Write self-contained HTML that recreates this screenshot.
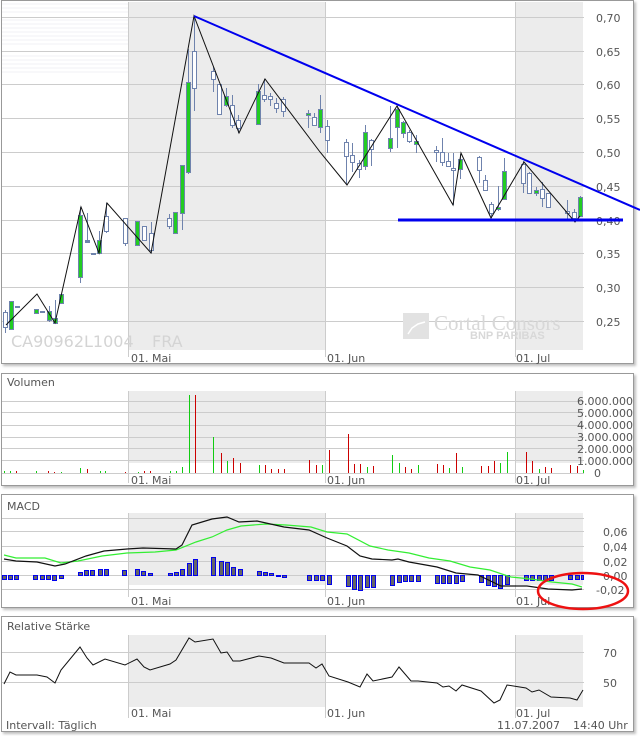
<!DOCTYPE html>
<html><head><meta charset="utf-8"><style>
html,body{margin:0;padding:0;background:#fff;width:640px;height:736px;overflow:hidden}
svg{display:block}
text{font-family:"DejaVu Sans","Liberation Sans",sans-serif;fill:#555;font-size:11px}
</style></head><body>
<svg width="640" height="736" viewBox="0 0 640 736" xmlns="http://www.w3.org/2000/svg">
<defs><filter id="sh" x="-5%" y="-5%" width="110%" height="110%"><feDropShadow dx="2" dy="2" stdDeviation="1.2" flood-color="#000" flood-opacity="0.25"/></filter></defs>
<g fill="#fff" stroke="#999" stroke-width="1" filter="url(#sh)">
<rect x="1.5" y="0.5" width="632" height="363"/>
<rect x="1.5" y="373.5" width="632" height="112"/>
<rect x="1.5" y="494.5" width="632" height="113"/>
<rect x="1.5" y="616.5" width="632" height="115"/>
</g>
<g fill="#ececec"><rect x="128" y="2" width="197" height="348"/><rect x="515" y="2" width="68" height="348"/></g>
<g stroke="#f2f2f6" stroke-width="1"><path d="M2 4H128M2 8H128M2 12H128M2 20H128M2 24H128M2 28H128M2 32H128M2 36H128M2 40H128M2 44H128M2 56H128M2 60H128M2 64H128M2 68H128M2 72H128"/></g>
<g stroke="#ccc" stroke-width="1"><path d="M2 17.5H584M2 51.5H584M2 84.5H584M2 118.5H584M2 152.5H584M2 186.5H584M2 220.5H584M2 253.5H584M2 287.5H584M2 321.5H584"/><path d="M128.5 2V357M325.5 2V357M515.5 2V357"/></g>
<g font-size="12"><text x="596" y="22">0,70</text><text x="596" y="56">0,65</text><text x="596" y="89">0,60</text><text x="596" y="123">0,55</text><text x="596" y="157">0,50</text><text x="596" y="191">0,45</text><text x="596" y="225">0,40</text><text x="596" y="258">0,35</text><text x="596" y="292">0,30</text><text x="596" y="326">0,25</text></g>
<text x="131" y="362" font-size="12">01. Mai</text><text x="327" y="362" font-size="12">01. Jun</text><text x="516" y="362" font-size="12">01. Jul</text>
<text x="11" y="347" style="font-size:16px;fill:#d4d4d4">CA90962L1004</text>
<text x="152" y="347" style="font-size:16px;fill:#d4d4d4">FRA</text>
<rect x="403" y="313" width="26" height="26" fill="#e2e2e2"/>
<path d="M408 334l4-6 6-4 7-2" stroke="#fff" stroke-width="1.5" fill="none"/>
<text x="434" y="330" style="font-family:'Liberation Serif',serif;font-size:21px;fill:#d8d8d8">Cortal Consors</text>
<text x="470" y="339" style="font-family:'Liberation Sans',sans-serif;font-size:11px;font-weight:bold;fill:#d8d8d8">BNP PARIBAS</text>
<path stroke="#6f83ad" stroke-width="1" fill="none" d="M5.5 310V333M49.5 306V322M55.5 300V323M80.5 207V283M87.5 213V243M99.5 231V253M106.5 203V233M125.5 218V246M151.5 222V253M169.5 214V229M182.5 165V230M188.5 49V174M194.5 16V111M213.5 67V92M226.5 88V107M232.5 95V128M238.5 115V133M258.5 84V124M264.5 79V102M270.5 93V106M276.5 98V113M283.5 97V117M308.5 110V128M314.5 113V126M320.5 95V133M327.5 120V153M346.5 139V184M352.5 143V172M359.5 160V178M365.5 125V170M371.5 139V166M390.5 106V152M397.5 106V148M403.5 121V138M409.5 130V143M416.5 135V153M436.5 146V162M442.5 138V166M448.5 153V166M453.5 153V205M460.5 154V179M479.5 156V183M485.5 175V191M491.5 202V218M498.5 186V211M504.5 158V200M523.5 161V193M529.5 172V193M536.5 187V196M542.5 182V207M548.5 193V208M567.5 200V220M574.5 209V221M580.5 196V216"/>
<g stroke="#6f83ad" stroke-width="1" fill="#fff">
<rect x="3.5" y="312.5" width="4" height="15"/><rect x="104.5" y="216.5" width="4" height="15"/><rect x="123.5" y="218.5" width="4" height="25"/><rect x="142.5" y="226.5" width="4" height="14"/><rect x="149.5" y="233.5" width="4" height="17"/><rect x="167.5" y="218.5" width="4" height="8"/><rect x="192.5" y="51.5" width="4" height="37"/><rect x="211.5" y="71.5" width="4" height="8"/><rect x="217.5" y="84.5" width="4" height="30"/><rect x="230.5" y="105.5" width="4" height="20"/><rect x="236.5" y="120.5" width="4" height="8"/><rect x="262.5" y="95.5" width="4" height="4"/><rect x="268.5" y="96.5" width="4" height="3"/><rect x="274.5" y="103.5" width="4" height="5"/><rect x="281.5" y="99.5" width="4" height="12"/><rect x="312.5" y="117.5" width="4" height="8"/><rect x="325.5" y="126.5" width="4" height="14"/><rect x="344.5" y="142.5" width="4" height="14"/><rect x="350.5" y="155.5" width="4" height="7"/><rect x="357.5" y="163.5" width="4" height="6"/><rect x="369.5" y="140.5" width="4" height="9"/><rect x="407.5" y="132.5" width="4" height="9"/><rect x="434.5" y="150.5" width="4" height="2"/><rect x="440.5" y="152.5" width="4" height="10"/><rect x="446.5" y="161.5" width="4" height="5"/><rect x="451.5" y="168.5" width="4" height="2"/><rect x="477.5" y="157.5" width="4" height="13"/><rect x="483.5" y="180.5" width="4" height="10"/><rect x="489.5" y="204.5" width="4" height="9"/><rect x="521.5" y="164.5" width="4" height="19"/><rect x="527.5" y="173.5" width="4" height="20"/><rect x="540.5" y="189.5" width="4" height="9"/><rect x="546.5" y="193.5" width="4" height="14"/><rect x="565.5" y="211.5" width="4" height="2"/><rect x="572.5" y="212.5" width="4" height="6"/>
</g>
<g fill="#6f83ad"><rect x="15" y="306" width="5" height="2"/><rect x="40" y="311" width="5" height="2"/><rect x="85" y="240" width="5" height="3"/><rect x="91" y="253" width="5" height="2"/></g>
<g stroke="#6f83ad" stroke-width="1" fill="#22cc22">
<rect x="9.5" y="301.5" width="4" height="28"/><rect x="34.5" y="309.5" width="4" height="4"/><rect x="47.5" y="311.5" width="4" height="9"/><rect x="53.5" y="318.5" width="4" height="5"/><rect x="59.5" y="294.5" width="4" height="9"/><rect x="78.5" y="215.5" width="4" height="62"/><rect x="97.5" y="240.5" width="4" height="13"/><rect x="135.5" y="221.5" width="4" height="24"/><rect x="173.5" y="212.5" width="4" height="21"/><rect x="180.5" y="165.5" width="4" height="48"/><rect x="186.5" y="82.5" width="4" height="90"/><rect x="224.5" y="96.5" width="4" height="9"/><rect x="256.5" y="91.5" width="4" height="33"/><rect x="306.5" y="113.5" width="4" height="2"/><rect x="318.5" y="109.5" width="4" height="18"/><rect x="363.5" y="132.5" width="4" height="34"/><rect x="388.5" y="138.5" width="4" height="10"/><rect x="395.5" y="109.5" width="4" height="18"/><rect x="401.5" y="122.5" width="4" height="11"/><rect x="414.5" y="141.5" width="4" height="3"/><rect x="458.5" y="159.5" width="4" height="10"/><rect x="496.5" y="207.5" width="4" height="2"/><rect x="502.5" y="171.5" width="4" height="28"/><rect x="534.5" y="190.5" width="4" height="3"/><rect x="578.5" y="197.5" width="4" height="19"/>
</g>
<polyline fill="none" stroke="#111" stroke-width="1" points="6,325 37,294 55,323 81,207 99,253 107,203 151,253 194,16 239,133 265,79 320,152 347,185 397,106 453,205 461,153 491,218 524,162 575,222 580,216"/>
<line x1="194" y1="16" x2="640" y2="210" stroke="#0000ee" stroke-width="2"/>
<line x1="398" y1="220" x2="623" y2="220" stroke="#0000ee" stroke-width="3"/>
<text x="7" y="386" font-size="11">Volumen</text>
<g fill="#ececec"><rect x="128" y="391" width="197" height="72"/><rect x="515" y="391" width="68" height="72"/></g>
<g stroke="#ccc"><path d="M2 401.5H584M2 412.5H584M2 425.5H584M2 437.5H584M2 448.5H584M2 460.5H584M2 473.5H584"/><path d="M128.5 391V483M325.5 391V483M515.5 391V483"/></g>
<g font-size="12" text-anchor="end"><text x="633" y="405">6.000.000</text><text x="633" y="417">5.000.000</text><text x="633" y="429">4.000.000</text><text x="633" y="441">3.000.000</text><text x="633" y="453">2.000.000</text><text x="633" y="465">1.000.000</text><text x="601" y="477">0</text></g>
<text x="131" y="484" font-size="12">01. Mai</text><text x="327" y="484" font-size="12">01. Jun</text><text x="516" y="484" font-size="12">01. Jul</text>
<path stroke="#11cc11" stroke-width="1" d="M4.5 471V473M10.5 471V473M36.5 471V473M61.5 472V473M80.5 468V473M100.5 471V473M105.5 471V473M138.5 472V473M170.5 471V473M176.5 471V473M182.5 467V473M189.5 395V473M213.5 437V473M227.5 461V473M259.5 465V473M322.5 465V473M367.5 467V473M392.5 455V473M399.5 463V473M418.5 465V473M449.5 468V473M462.5 467V473M500.5 463V473M507.5 452V473M539.5 469V473M583.5 470V473"/>
<path stroke="#cc0000" stroke-width="1" d="M16.5 471V473M48.5 471V473M54.5 472V473M87.5 469V473M125.5 472V473M144.5 471V473M150.5 471V473M195.5 395V473M221.5 453V473M233.5 458V473M240.5 463V473M265.5 465V473M271.5 469V473M278.5 469V473M284.5 469V473M309.5 460V473M316.5 465V473M329.5 450V473M348.5 434V473M354.5 464V473M360.5 464V473M373.5 466V473M405.5 467V473M411.5 469V473M437.5 464V473M443.5 465V473M456.5 453V473M481.5 466V473M488.5 466V473M494.5 461V473M526.5 452V473M532.5 461V473M545.5 467V473M551.5 468V473M570.5 465V473M577.5 466V473"/>
<text x="7" y="510" font-size="11">MACD</text>
<g fill="#ececec"><rect x="128" y="513" width="197" height="72"/><rect x="515" y="513" width="68" height="72"/></g>
<g stroke="#ccc"><path d="M2 518.5H584M2 531.5H584M2 546.5H584M2 561.5H584M2 575.5H584M2 589.5H584"/><path d="M128.5 513V597M325.5 513V597M515.5 513V597"/></g>
<g font-size="12"><text x="603" y="536">0,06</text><text x="603" y="551">0,04</text><text x="603" y="566">0,02</text><text x="603" y="580">0,00</text><text x="596" y="594">-0,02</text></g>
<text x="131" y="605" font-size="12">01. Mai</text><text x="327" y="605" font-size="12">01. Jun</text><text x="516" y="605" font-size="12">01. Jul</text>
<g fill="#666" stroke="#0000ee" stroke-width="1">
<rect x="2.5" y="575.5" width="4" height="4"/><rect x="8.5" y="575.5" width="4" height="4"/><rect x="14.5" y="575.5" width="4" height="4"/><rect x="33.5" y="575.5" width="4" height="4"/><rect x="40.5" y="575.5" width="4" height="4"/><rect x="46.5" y="575.5" width="4" height="4"/><rect x="52.5" y="575.5" width="4" height="5"/><rect x="59.5" y="575.5" width="4" height="3"/>
<rect x="78.5" y="572.5" width="4" height="3"/><rect x="84.5" y="570.5" width="4" height="5"/><rect x="90.5" y="570.5" width="4" height="5"/><rect x="98.5" y="569.5" width="4" height="6"/><rect x="104.5" y="569.5" width="4" height="6"/><rect x="122.5" y="570.5" width="4" height="5"/><rect x="135.5" y="569.5" width="4" height="6"/><rect x="141.5" y="571.5" width="4" height="4"/><rect x="148.5" y="573.5" width="4" height="2"/><rect x="168.5" y="573.5" width="4" height="2"/><rect x="174.5" y="572.5" width="4" height="3"/><rect x="180.5" y="569.5" width="4" height="6"/><rect x="187.5" y="563.5" width="4" height="12"/><rect x="193.5" y="559.5" width="4" height="16"/><rect x="211.5" y="557.5" width="4" height="18"/><rect x="219.5" y="561.5" width="4" height="14"/><rect x="225.5" y="562.5" width="4" height="13"/><rect x="231.5" y="567.5" width="4" height="8"/><rect x="238.5" y="569.5" width="4" height="6"/><rect x="257.5" y="571.5" width="4" height="4"/><rect x="263.5" y="572.5" width="4" height="3"/><rect x="269.5" y="573.5" width="4" height="2"/><rect x="276.5" y="575.5" width="4" height="1"/><rect x="282.5" y="575.5" width="4" height="2"/>
<rect x="307.5" y="575.5" width="4" height="5"/><rect x="314.5" y="575.5" width="4" height="5"/><rect x="320.5" y="575.5" width="4" height="5"/><rect x="327.5" y="575.5" width="4" height="9"/><rect x="346.5" y="575.5" width="4" height="11"/><rect x="352.5" y="575.5" width="4" height="14"/><rect x="358.5" y="575.5" width="4" height="15"/><rect x="365.5" y="575.5" width="4" height="12"/><rect x="371.5" y="575.5" width="4" height="12"/><rect x="390.5" y="575.5" width="4" height="10"/><rect x="397.5" y="575.5" width="4" height="7"/><rect x="403.5" y="575.5" width="4" height="6"/><rect x="409.5" y="575.5" width="4" height="6"/><rect x="416.5" y="575.5" width="4" height="6"/><rect x="435.5" y="575.5" width="4" height="8"/><rect x="441.5" y="575.5" width="4" height="8"/><rect x="447.5" y="575.5" width="4" height="8"/><rect x="454.5" y="575.5" width="4" height="8"/><rect x="460.5" y="575.5" width="4" height="6"/><rect x="479.5" y="575.5" width="4" height="7"/><rect x="486.5" y="575.5" width="4" height="10"/><rect x="492.5" y="575.5" width="4" height="11"/><rect x="498.5" y="575.5" width="4" height="13"/><rect x="505.5" y="575.5" width="4" height="9"/><rect x="524.5" y="575.5" width="4" height="5"/><rect x="530.5" y="575.5" width="4" height="5"/><rect x="537.5" y="575.5" width="4" height="5"/><rect x="543.5" y="575.5" width="4" height="5"/><rect x="549.5" y="575.5" width="4" height="5"/><rect x="568.5" y="575.5" width="4" height="4"/><rect x="575.5" y="575.5" width="4" height="4"/><rect x="581.5" y="575.5" width="2" height="4"/>
</g>
<polyline fill="none" stroke="#33ee33" stroke-width="1.2" points="4,555 16,558 45,558 61,563 78,561 102,556 127,553 155,552 176,550 196,542 212,537 227,530 241,526 266,524 286,525 311,527 327,532 347,534 370,546 388,550 409,553 429,558 450,561 470,567 490,570 511,577 531,579 552,582 572,584 582,587"/>
<polyline fill="none" stroke="#111" stroke-width="1.2" points="4,559 16,561 37,562 55,566 65,564 86,556 104,551 127,549 143,548 176,549 182,545 192,525 212,519 227,517 239,522 257,521 284,527 309,530 327,538 347,546 360,556 372,559 392,560 398,559 409,562 437,567 456,573 478,575 501,586 527,586 548,589 572,590 582,589"/>
<ellipse cx="583" cy="591" rx="45" ry="18" fill="none" stroke="#ee1111" stroke-width="2.5"/>
<text x="7" y="630" font-size="11">Relative Stärke</text>
<g fill="#ececec"><rect x="128" y="635" width="197" height="72"/><rect x="515" y="635" width="68" height="72"/></g>
<g stroke="#ccc"><path d="M2 652.5H584M2 682.5H584"/><path d="M128.5 635V718M325.5 635V718M515.5 635V718"/></g>
<g font-size="12"><text x="603" y="657">70</text><text x="603" y="687">50</text></g>
<text x="131" y="717" font-size="12">01. Mai</text><text x="327" y="717" font-size="12">01. Jun</text><text x="516" y="717" font-size="12">01. Jul</text>
<polyline fill="none" stroke="#111" stroke-width="1" points="4,684 10,672 16,675 37,675 47,677 55,683 61,670 80,647 87,658 93,665 105,659 125,665 137,659 144,667 150,670 170,664 176,660 189,638 195,642 213,639 221,653 227,652 233,661 240,661 259,656 271,658 284,663 309,663 316,668 322,664 329,676 348,682 360,687 367,674 373,681 392,677 399,667 411,681 418,681 437,683 443,687 449,686 456,691 462,685 481,691 494,703 500,700 507,685 526,688 532,692 539,690 551,697 570,698 577,700 583,690"/>
<text x="6" y="729" font-size="12">Intervall: Täglich</text>
<text x="497" y="729" font-size="12">11.07.2007</text>
<text x="573" y="729" font-size="12">14:40 Uhr</text>
</svg>
</body></html>
